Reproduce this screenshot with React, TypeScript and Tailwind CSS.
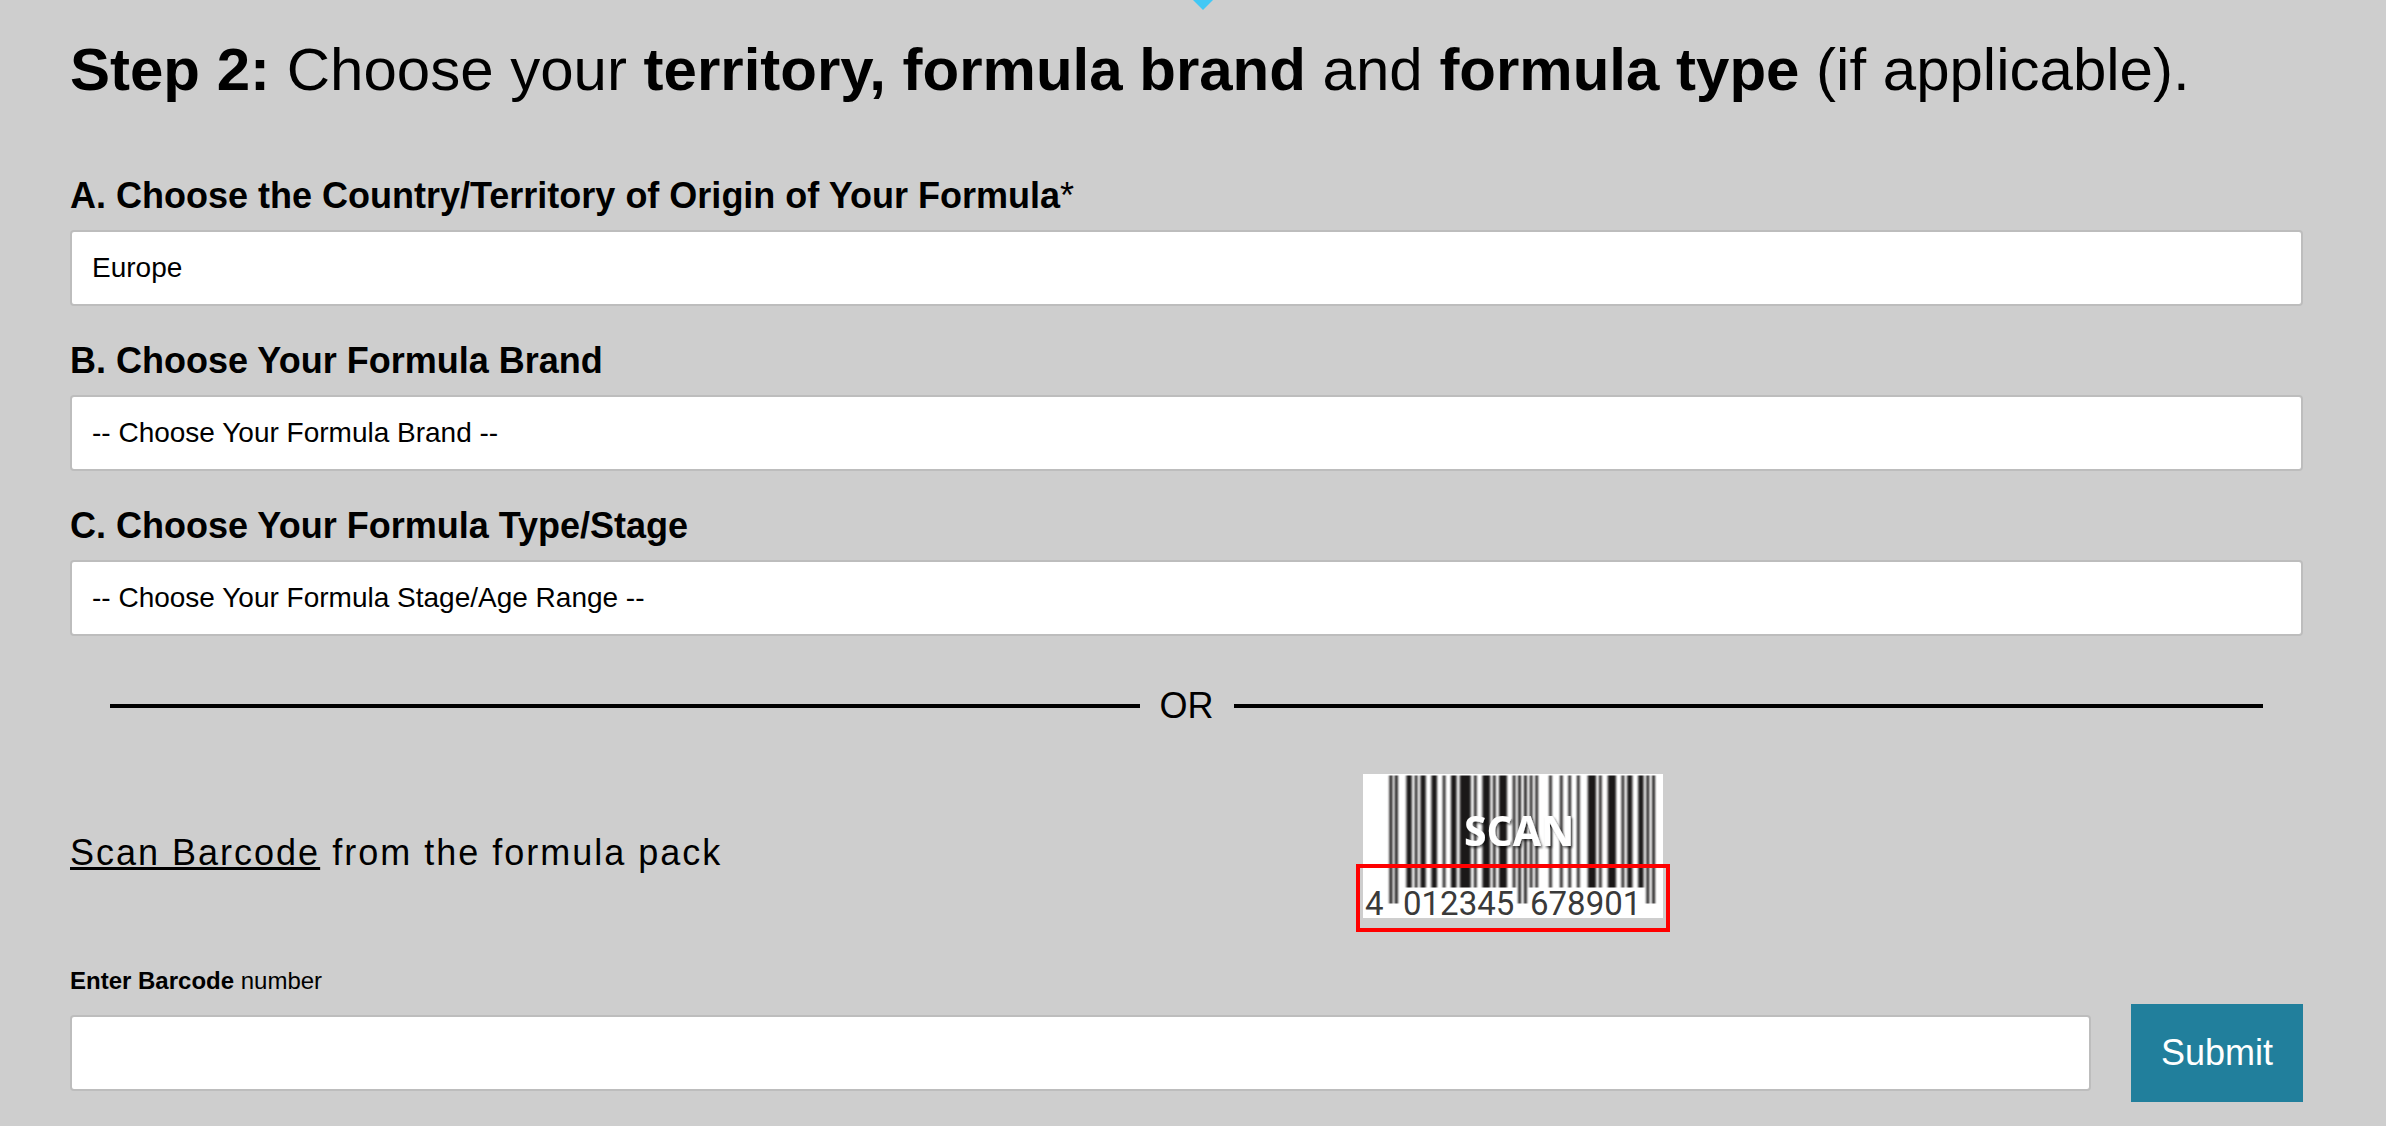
import { useState } from "react";

interface Bar {
  x: number;
  w: number;
  guard?: boolean;
}

const BARS: Bar[] = [
  { x: 26.4, w: 3, guard: true },
  { x: 31.8, w: 3, guard: true },
  { x: 43.4, w: 5.4 },
  { x: 51.8, w: 2.6 },
  { x: 57.4, w: 5.4 },
  { x: 68.4, w: 5.6 },
  { x: 79.8, w: 2.6 },
  { x: 88, w: 5.6 },
  { x: 96.8, w: 11 },
  { x: 111, w: 2.6 },
  { x: 119.4, w: 7.8 },
  { x: 130, w: 2.6 },
  { x: 136, w: 8 },
  { x: 149.8, w: 2.6 },
  { x: 155.2, w: 2.8, guard: true },
  { x: 161, w: 2.8, guard: true },
  { x: 166.8, w: 2.6 },
  { x: 172.4, w: 2.6 },
  { x: 186.2, w: 2.6 },
  { x: 197, w: 2.6 },
  { x: 205.4, w: 2.6 },
  { x: 214, w: 2.6 },
  { x: 224.8, w: 8.2 },
  { x: 236, w: 2.6 },
  { x: 244.8, w: 8.2 },
  { x: 258.6, w: 2.6 },
  { x: 264.2, w: 5.2 },
  { x: 275.2, w: 5.4 },
  { x: 283.4, w: 2.8, guard: true },
  { x: 289.2, w: 2.8, guard: true },
];

const BRANDS = ["-- Choose Your Formula Brand --"];
const STAGES = ["-- Choose Your Formula Stage/Age Range --"];
const TERRITORIES = ["Europe"];

function BarcodeImage() {
  return (
    <svg width="314" height="158" viewBox="-7 0 314 158" aria-hidden="true">
      <defs>
        <filter id="soft" x="-5%" y="-5%" width="110%" height="110%" colorInterpolationFilters="sRGB">
          <feGaussianBlur stdDeviation="0.8 0.5" />
        </filter>
        <filter id="shadow" x="-10%" y="-20%" width="130%" height="150%">
          <feDropShadow dx="1.5" dy="2" stdDeviation="1" floodColor="#000" floodOpacity="0.6" />
        </filter>
      </defs>
      <rect width="300" height="144" fill="#fff" />
      <g fill="#1a1818" filter="url(#soft)">
        {BARS.map((bar) => (
          <rect key={bar.x} x={bar.x} y="1.5" width={bar.w} height={bar.guard ? 128 : 112} />
        ))}
      </g>
      <g fill="#3a3a3a" fontFamily="Roboto, sans-serif" fontSize="33">
        <text x="2" y="141">4</text>
        <text x="40" y="141">012345</text>
        <text x="167" y="141">678901</text>
      </g>
      <text
        x="101" y="72" fill="#fff" filter="url(#shadow)"
        fontFamily="'Open Sans', sans-serif" fontSize="41" fontWeight="700"
      >
        SCAN
      </text>
      {/* Highlight around the digits */}
      <rect x="-5" y="92" width="310" height="64" fill="none" stroke="#f00" strokeWidth="4" />
    </svg>
  );
}

interface FieldProps {
  id: string;
  label: string;
  required?: boolean;
  options: string[];
}

function SelectField({ id, label, required, options }: FieldProps) {
  const [value, setValue] = useState(options[0]);

  return (
    <div className="flex flex-col gap-3">
      <label htmlFor={id} className="text-4xl leading-[44px] font-bold">
        {label}
        {required && <span className="font-normal">*</span>}
      </label>
      <select
        id={id}
        value={value}
        onChange={(e) => setValue(e.target.value)}
        className="w-full h-[76px] px-5 appearance-none bg-white border-2 border-[#bdbdbd] rounded text-[28px]"
      >
        {options.map((option) => (
          <option key={option}>{option}</option>
        ))}
      </select>
    </div>
  );
}

export default function App() {
  const [barcode, setBarcode] = useState("");

  return (
    <div className="min-h-screen bg-[#cecece] text-black font-['Liberation_Sans',Arial,sans-serif]">
      {/* Tip of the step arrow */}
      <div className="flex justify-center pl-5">
        <svg width="20" height="10" viewBox="0 0 20 10" fill="#42c8f5">
          <path d="M0 0h20L10 10z" />
        </svg>
      </div>

      <form className="pl-[70px] pr-[83px] pb-6" onSubmit={(e) => e.preventDefault()}>
        <h1 className="pt-6 text-6xl leading-[72px]">
          <b>Step 2:</b> Choose your <b>territory, formula brand</b> and <b>formula type</b> (if applicable).
        </h1>

        <div className="mt-[68px] flex flex-col gap-[33px]">
          <SelectField id="territory" label="A. Choose the Country/Territory of Origin of Your Formula" required options={TERRITORIES} />
          <SelectField id="brand" label="B. Choose Your Formula Brand" options={BRANDS} />
          <SelectField id="stage" label="C. Choose Your Formula Type/Stage" options={STAGES} />
        </div>

        <div className="mt-12 mx-10 flex items-center gap-5 text-4xl leading-[44px]">
          <div className="flex-1 h-1 bg-black" />
          OR
          <div className="flex-1 h-1 bg-black" />
        </div>

        <div className="mt-[46px] grid grid-cols-[19fr_14fr] items-center">
          <p className="text-4xl leading-[44px] tracking-[2px]">
            <a href="#scan" className="underline">Scan Barcode</a> from the formula pack
          </p>
          <BarcodeImage />
        </div>

        <label htmlFor="barcode" className="mt-[33px] block text-2xl leading-8">
          <b>Enter Barcode</b> number
        </label>
        <div className="mt-[7px] flex items-center gap-10">
          <input
            id="barcode"
            type="text"
            value={barcode}
            onChange={(e) => setBarcode(e.target.value)}
            className="flex-1 h-[76px] px-5 bg-white border-2 border-[#bdbdbd] rounded text-[28px]"
          />
          <button type="submit" className="h-[98px] px-[30px] bg-[#217f9c] text-white text-4xl">
            Submit
          </button>
        </div>
      </form>
    </div>
  );
}
